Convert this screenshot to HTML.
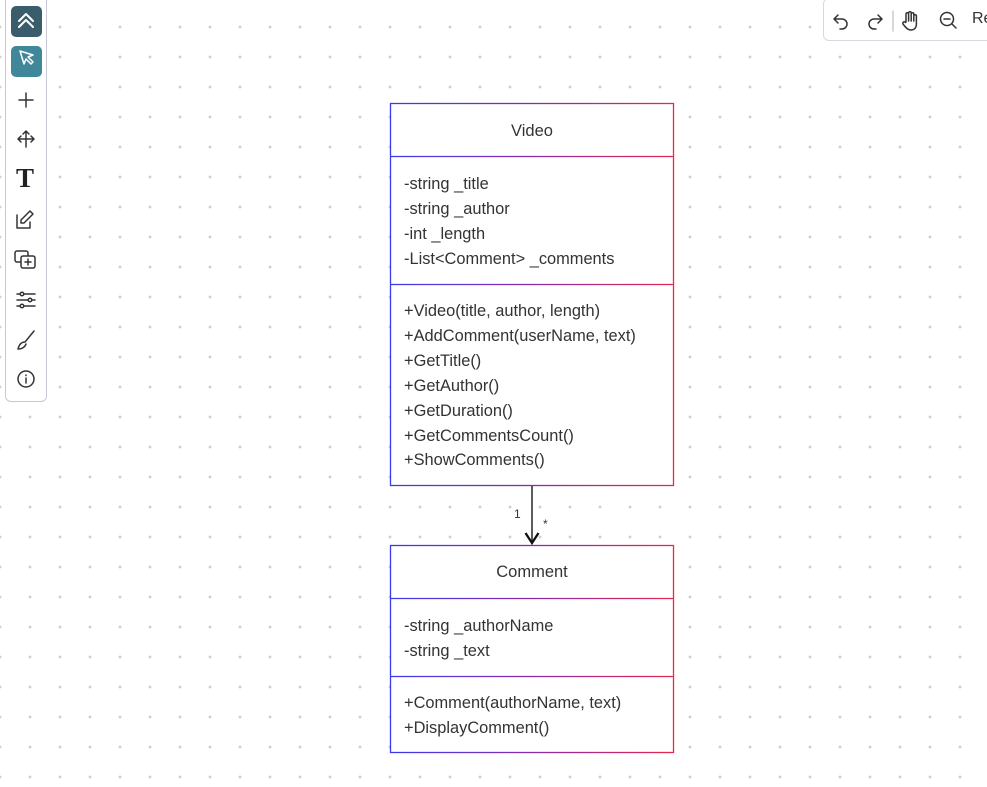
<!DOCTYPE html>
<html><head><meta charset="utf-8"><style>
html,body{margin:0;padding:0}
body{width:987px;height:787px;position:relative;overflow:hidden;background:#fff;
background-image:radial-gradient(circle,#cfcfcf 1.2px,transparent 1.7px);background-size:30px 30px;background-position:-15px 12px;
font-family:"Liberation Sans",Arial,sans-serif;color:#333}
.t{position:absolute;font-size:16.4px;line-height:24.9px;white-space:nowrap}
.c{position:absolute;text-align:center;font-size:16.5px}
#tb{position:absolute;left:5px;top:-2px;width:40px;height:402px;border:1px solid #c8c8d4;border-radius:0 0 6px 6px;background:#fff}
.btn{position:absolute;left:5px;width:31px;height:31px;border-radius:5px}
#top{position:absolute;left:823px;top:-2px;width:180px;height:41px;border:1px solid #d8d8e0;border-radius:6px;background:#fff}
svg.i{position:absolute}
</style></head><body>
<svg width="987" height="787" style="position:absolute;left:0;top:0">
<defs><linearGradient id="g" gradientUnits="userSpaceOnUse" x1="390" x2="674" y1="0" y2="0"><stop offset="0" stop-color="#3a3af0"/><stop offset="0.5" stop-color="#8a2aa8"/><stop offset="1" stop-color="#e8284c"/></linearGradient></defs>
<rect x="390.5" y="103.5" width="283" height="382" fill="#fff" stroke="url(#g)" stroke-width="1.3"/>
<line x1="390" y1="156.5" x2="674" y2="156.5" stroke="url(#g)" stroke-width="1.3"/>
<line x1="390" y1="284.5" x2="674" y2="284.5" stroke="url(#g)" stroke-width="1.3"/>
<rect x="390.5" y="545.5" width="283" height="207" fill="#fff" stroke="url(#g)" stroke-width="1.3"/>
<line x1="390" y1="598.5" x2="674" y2="598.5" stroke="url(#g)" stroke-width="1.3"/>
<line x1="390" y1="676.5" x2="674" y2="676.5" stroke="url(#g)" stroke-width="1.3"/>
<line x1="532" y1="486" x2="532" y2="543" stroke="#333" stroke-width="1.6"/>
<path d="M525.5 533 L532 543 L538.5 533" fill="none" stroke="#111" stroke-width="2.3"/>
<text x="514" y="518" font-size="12" fill="#333" font-family="Liberation Sans">1</text>
<text x="543" y="528" font-size="12" fill="#333" font-family="Liberation Sans">*</text>
</svg>
<div class="c" style="left:390px;width:284px;top:122px">Video</div>
<div class="t" style="left:404px;top:172px">-string _title<br>-string _author<br>-int _length<br>-List&lt;Comment&gt; _comments</div>
<div class="t" style="left:404px;top:299px">+Video(title, author, length)<br>+AddComment(userName, text)<br>+GetTitle()<br>+GetAuthor()<br>+GetDuration()<br>+GetCommentsCount()<br>+ShowComments()</div>
<div class="c" style="left:390px;width:284px;top:563px">Comment</div>
<div class="t" style="left:404px;top:614px">-string _authorName<br>-string _text</div>
<div class="t" style="left:404px;top:691px">+Comment(authorName, text)<br>+DisplayComment()</div>

<div id="tb">
<div class="btn" style="top:7px;background:#3a5d6b"></div>
<div class="btn" style="top:47px;background:#3f8799"></div>
</div>
<svg class="i" width="46" height="400" style="left:3px;top:0" fill="none" stroke="#333" stroke-width="1.5" stroke-linecap="round" stroke-linejoin="round">
<path d="M16 21 L23 14 L30 21 M16 27 L23 20 L30 27" stroke="#fff" stroke-width="2"/>
<path d="M17 51 L21 64 L23 59 L28 64 L30 62 L25 57 L30 55 Z" stroke="#fff"/>
<path d="M23 93 V107 M16 100 H30"/>
<path d="M23 131 V147 M15 139 H31 M20 134 L23 131 L26 134 M18 136 L15 139 L18 142 M28 136 L31 139 L28 142"/>
<path d="M14 215 V228 H27 V222 M27 211 L30 214 L21 223 H18 V220 Z"/>
<rect x="12" y="251" width="13" height="11" rx="2"/><rect x="18" y="256" width="14" height="12" rx="2" fill="#fff"/><path d="M25 259 V265 M22 262 H28"/>
<path d="M14 294 H32 M14 300 H32 M14 306 H32"/><circle cx="19" cy="294" r="1.8" fill="#fff"/><circle cx="27" cy="300" r="1.8" fill="#fff"/><circle cx="19" cy="306" r="1.8" fill="#fff"/>
<path d="M31 331 L22 342 M22 342 C18 342 16 345 15 349 C19 349 22 347 23 344"/>
<circle cx="23" cy="379" r="8"/><path d="M23 378 V383 M23 375 V375.5"/>
</svg>
<div style="position:absolute;left:16px;top:165px;font-family:'Liberation Serif',serif;font-weight:bold;font-size:27px;line-height:27px;color:#222">T</div>

<div id="top"></div>
<svg class="i" width="160" height="40" style="left:827px;top:0" fill="none" stroke="#333" stroke-width="1.5" stroke-linecap="round" stroke-linejoin="round">
<path d="M11 15 L7 19 L11 23 M7 19 H15 A5 5 0 0 1 15 29 H13"/>
<path d="M51 15 L55 19 L51 23 M55 19 H47 A5 5 0 0 0 47 29 H49"/>
<path d="M66 11 V31" stroke="#ccc"/>
<path d="M79 22 V14 a1.3 1.3 0 0 1 2.6 0 V21 M81.6 13 a1.3 1.3 0 0 1 2.6 0 V21 M84.2 14 a1.3 1.3 0 0 1 2.6 0 V21 M86.8 16 a1.3 1.3 0 0 1 2.6 0 V24 C89.4 28 87 30 84 30 C81 30 79 28 76 24 a1.3 1.3 0 0 1 2.5-1.5 L79 22"/>
<circle cx="120" cy="19" r="6.5"/><path d="M125 24 L129 28 M117 19 H123"/>
</svg>
<div style="position:absolute;left:972px;top:10px;font-size:16px;color:#333">Re</div>
</body></html>
